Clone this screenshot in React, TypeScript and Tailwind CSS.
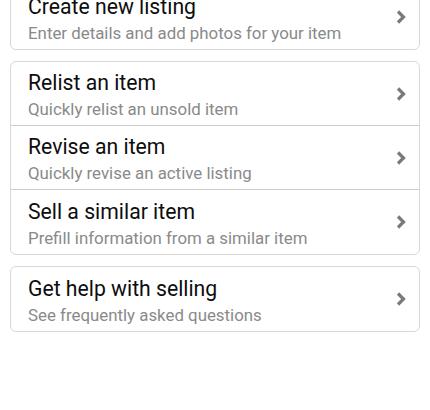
import React from "react";

type Item = { title: string; sub: string };

const groups: Item[][] = [
  [{ title: "Create new listing", sub: "Enter details and add photos for your item" }],
  [
    { title: "Relist an item", sub: "Quickly relist an unsold item" },
    { title: "Revise an item", sub: "Quickly revise an active listing" },
    { title: "Sell a similar item", sub: "Prefill information from a similar item" },
  ],
  [{ title: "Get help with selling", sub: "See frequently asked questions" }],
];

function Chevron() {
  return (
    <svg width="12" height="14" viewBox="0 0 12 14" className="shrink-0">
      <path d="M3 1.5 L8.5 7 L3 12.5" fill="none" stroke="#7a7a7a" strokeWidth="3.2" strokeLinejoin="miter" strokeLinecap="butt" />
    </svg>
  );
}

function Row({ item, last }: { item: Item; last: boolean }) {
  return (
    <div className={"flex items-center pl-[17px] pr-[12px] h-[64px] " + (last ? "" : "border-b border-[#cfcfcf]")}>
      <div className="flex-1 flex flex-col pt-[3px]">
        <div className="text-[21.2px] leading-[24px] text-[#0d0d0d]">{item.title}</div>
        <div className="text-[16.85px] leading-[20px] mt-[4px] text-[#8a8a8a]">{item.sub}</div>
      </div>
      <Chevron />
    </div>
  );
}

export default function App() {
  return (
    <div className="w-[430px] h-[410px] bg-white overflow-hidden px-[10px] flex flex-col gap-[11px]" style={{ fontFamily: "Roboto, 'Noto Sans', sans-serif" }}>
      {groups.map((g, gi) => (
        <div key={gi} className={"border border-[#d8d8d8] rounded-[6px] bg-white " + (gi === 0 ? "mt-[-16px]" : "")}>
          {g.map((it, i) => (
            <Row key={i} item={it} last={i === g.length - 1} />
          ))}
        </div>
      ))}
    </div>
  );
}
